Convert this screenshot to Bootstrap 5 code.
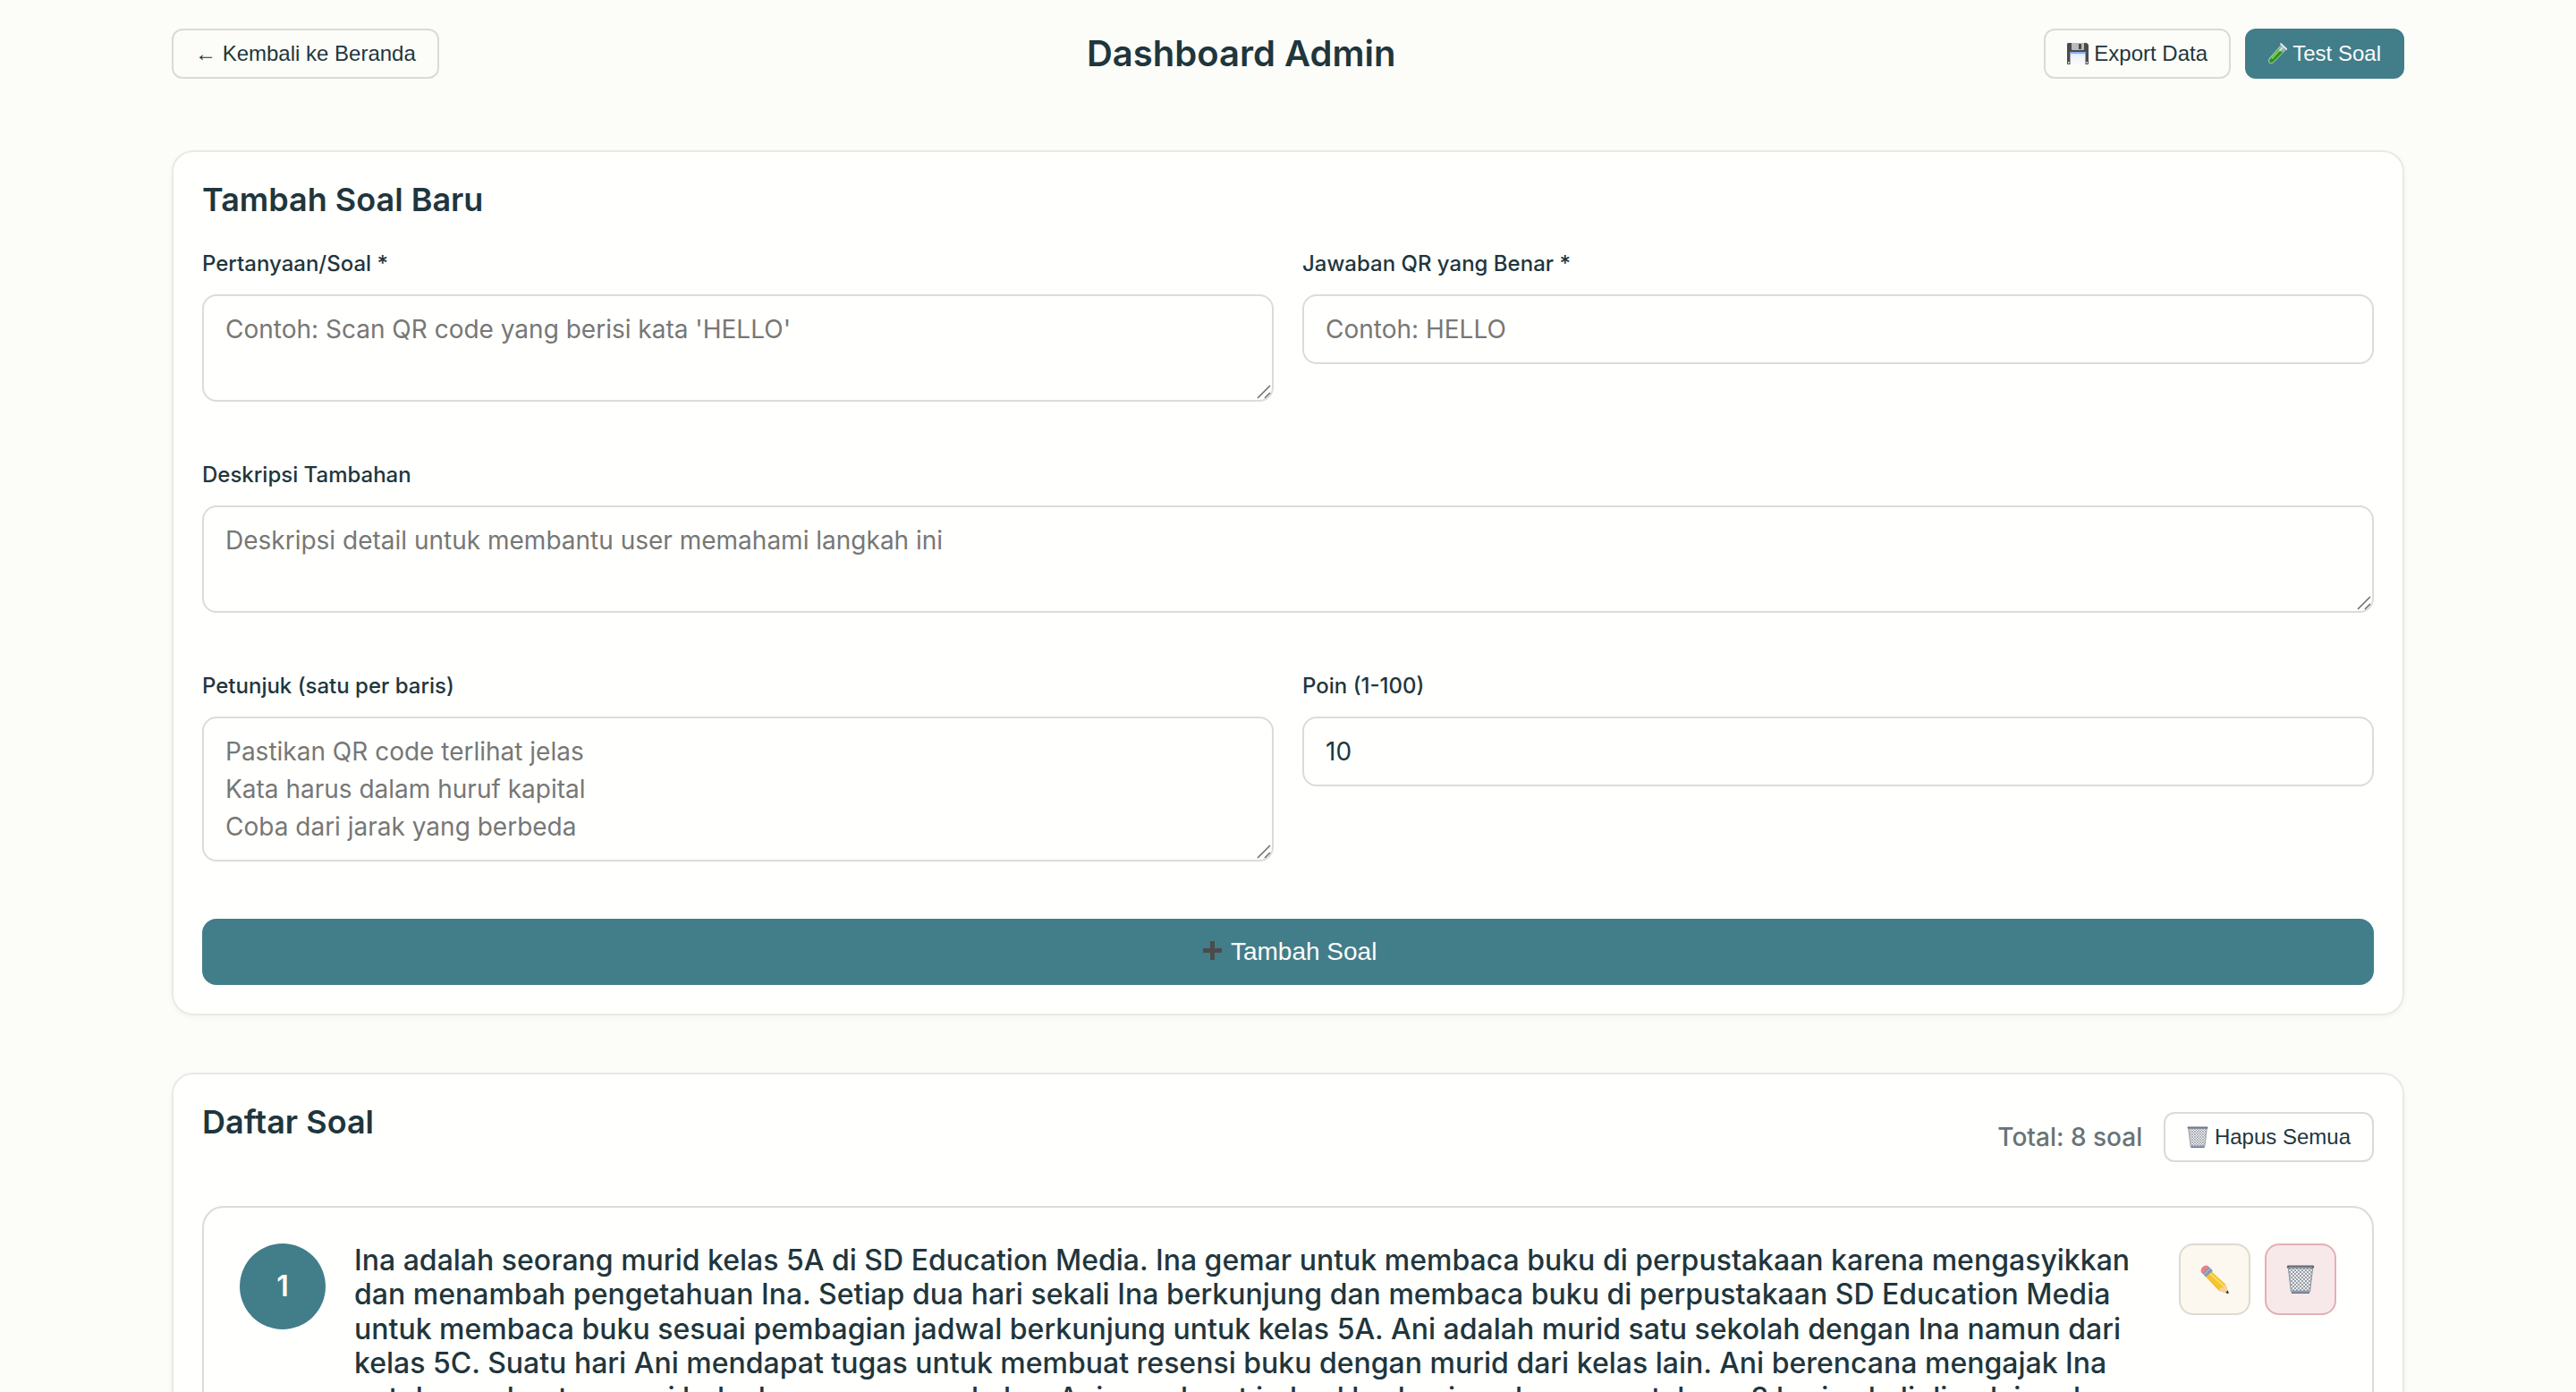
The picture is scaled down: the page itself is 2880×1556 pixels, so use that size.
<!DOCTYPE html>
<html lang="id">
<head>
<meta charset="utf-8">
<meta name="viewport" content="width=device-width, initial-scale=1">
<title>Dashboard Admin</title>
<link href="https://cdn.jsdelivr.net/npm/bootstrap@5.3.0/dist/css/bootstrap.min.css" rel="stylesheet">
<style>
  :root {
    --ink: #1f363d;
    --teal: #427d8a;
    --line: #dbdbd9;
    --surface: #fffffd;
  }
  body {
    background: #fcfdf8;
    color: var(--ink);
    font-family: Inter, "Liberation Sans", sans-serif;
    font-size: 28px;
    line-height: 42px;
  }
  .page-wrap { max-width: 2560px; padding: 32px; }
  .page-head { margin-bottom: 80px; }
  .page-title { font-size: 40px; line-height: 48px; font-weight: 600; }
  .section-title { font-size: 36px; line-height: 43px; font-weight: 600; margin-bottom: 32px; }

  .btn {
    --bs-btn-font-family: "Liberation Sans", Arial, sans-serif;
    --bs-btn-color: var(--ink);
    --bs-btn-border-width: 2px;
    --bs-btn-font-size: 28px;
    --bs-btn-line-height: 42px;
    --bs-btn-border-radius: 16px;
    --bs-btn-padding-x: 32px;
    --bs-btn-padding-y: 14px;
  }
  .btn-small {
    --bs-btn-font-size: 24px;
    --bs-btn-line-height: 36px;
    --bs-btn-border-radius: 12px;
    --bs-btn-padding-x: 24px;
    --bs-btn-padding-y: 8px;
  }
  .btn-line { --bs-btn-border-color: #dadbd7; --bs-btn-hover-border-color: #c4c5c1; --bs-btn-hover-color: var(--ink); }
  .btn-teal {
    --bs-btn-color: #fcfcf9; --bs-btn-bg: var(--teal); --bs-btn-border-color: var(--teal);
    --bs-btn-hover-color: #fff; --bs-btn-hover-bg: #386e7a; --bs-btn-hover-border-color: #386e7a;
  }
  .btn-square { --bs-btn-padding-x: 0; --bs-btn-padding-y: 0; width: 80px; height: 80px; }
  .btn-edit { --bs-btn-bg: #fdf8ef; --bs-btn-border-color: #dfdacf; --bs-btn-hover-bg: #f8efdd; --bs-btn-hover-border-color: #dfdacf; }
  .btn-remove { --bs-btn-bg: #f7e9e9; --bs-btn-border-color: #e4afb4; --bs-btn-hover-bg: #f2dada; --bs-btn-hover-border-color: #e4afb4; }

  .emo { width: 24px; height: 24px; vertical-align: -4px; }
  .emo-slim { width: 21px; }
  .emo-mid { width: 28px; height: 28px; vertical-align: -4px; }
  .emo-big { width: 32px; height: 32px; }

  .panel {
    --bs-card-bg: var(--surface);
    --bs-card-border-color: #e9eae6;
    --bs-card-border-width: 2px;
    --bs-card-border-radius: 24px;
    --bs-card-inner-border-radius: 22px;
    --bs-card-spacer-x: 32px;
    --bs-card-spacer-y: 32px;
    --bs-card-color: var(--ink);
    box-shadow: 0 2px 6px rgba(0, 0, 0, .04);
    margin-bottom: 64px;
  }
  .form-stack { gap: 64px; }
  .field-row { --bs-gutter-x: 32px; }
  .form-label { font-size: 24px; line-height: 36px; font-weight: 500; margin-bottom: 16px; display: block; }
  .form-control, .form-control:focus {
    background: var(--surface);
    border: 2px solid var(--line);
    border-radius: 16px;
    color: var(--ink);
    font-size: 28px;
    line-height: 42px;
    padding: 16px 24px;
  }
  .form-control::placeholder { color: #777776; opacity: 1; }
  textarea.form-control { resize: none; }
  .grip { position: absolute; right: 3px; bottom: 3px; width: 16px; height: 16px; pointer-events: none; }

  .list-head { margin-bottom: 40px; }
  .total-text { color: #687378; font-weight: 500; }
  .question { --bs-card-border-color: var(--line); --bs-card-spacer-x: 40px; --bs-card-spacer-y: 40px; box-shadow: none; margin: 0; }
  .question-no {
    width: 96px; height: 96px; background: var(--teal); color: #fcfcf9;
    font-size: 32px; font-weight: 600;
  }
  .question-text { font-size: 32px; font-weight: 500; line-height: 1.2; }
</style>
</head>
<body>

<svg class="position-absolute" width="0" height="0" aria-hidden="true">
  <defs>
    <linearGradient id="gLabel" x1="0" y1="0" x2="0" y2="1"><stop offset="0" stop-color="#c9ddfb"/><stop offset=".35" stop-color="#eef2fa"/><stop offset="1" stop-color="#fafafa"/></linearGradient>
    <linearGradient id="gPencil" x1="0" y1="1" x2="1" y2="0"><stop offset="0" stop-color="#d99a1c"/><stop offset=".45" stop-color="#f6c531"/><stop offset="1" stop-color="#e9a92a"/></linearGradient>
    <pattern id="mesh" width="4" height="4" patternUnits="userSpaceOnUse">
      <path d="M0 0L4 4M4 0L0 4" stroke="#777b83" stroke-width=".7" fill="none"/>
    </pattern>
  </defs>
  <symbol id="i-disk" viewBox="0 0 24 24">
    <path d="M0 1.500Q0 0 1 0H22L24 2V23Q24 24 23 24H1Q0 24 0 23Z" fill="#4b4b4d"/>
    <path d="M5 0H19V7Q19 8 18 8H6Q5 8 5 7Z" fill="#b9babc"/>
    <path d="M13 1H16V7H13Z" fill="#4b4b4d"/>
    <path d="M3.500 10H20.500V24H3.500Z" fill="url(#gLabel)"/>
    <path d="M3.500 10H20.500V12H3.500Z" fill="#86aef0"/>
    <path d="M1 21H2.500V23H1ZM21.500 21H23V23H21.500Z" fill="#e4e4e4"/>
  </symbol>
  <symbol id="i-tube" viewBox="1 0 21 24">
    <path d="M16 1.500L21.500 6.500L7 21.500Q4 24 2 22Q0 20 2.500 17Z" fill="#8fb3a8" stroke="#b9ccd0" stroke-width=".8"/>
    <path d="M12 7.500L17 10.500L6.500 21Q4 23 2.600 21.600Q1.200 20 3.500 17.500Z" fill="#2f9418"/>
    <path d="M13 8.500L5 17.500" stroke="#7fdc4c" stroke-width="1.800"/>
    <path d="M15 1L21.500 7" stroke="#dfe8ea" stroke-width="1.800" stroke-linecap="round"/>
    <path d="M17 5L13.500 9" stroke="#e8f1f2" stroke-width="1.200"/>
  </symbol>
  <symbol id="i-plus" viewBox="0 0 28 28">
    <path d="M12 3H17V11H25V16H17V24H12V16H4V11H12Z" fill="#4b4b4d"/>
  </symbol>
  <symbol id="i-bin" viewBox="0 0 32 32">
    <path d="M2 3H30L26.500 30Q26 31.500 24 31.500H8Q6 31.500 5.500 30Z" fill="#eceef0"/>
    <path d="M2 3H30L26.500 30H5.500Z" fill="url(#mesh)"/>
    <path d="M2.500 4L5.500 30M29.500 4L26.500 30" stroke="#9298a2" stroke-width="1.200"/>
    <path d="M5.300 28.500H26.700L26 31.500H6Z" fill="#8f9db3"/>
    <path d="M6 31.300H26" stroke="#5b6270" stroke-width="1"/>
    <rect x=".8" y=".6" width="30.400" height="3.200" rx="1.400" fill="#62666e"/>
    <path d="M3 2.800H29" stroke="#9fb0cc" stroke-width=".9"/>
  </symbol>
  <symbol id="i-pencil" viewBox="0 0 32 32">
    <path d="M8.500 3.500L28.500 22L31.500 32L21 29L2.500 9.500Z" fill="url(#gPencil)"/>
    <path d="M9.500 8L27 24.500" stroke="#fbdd5e" stroke-width="2"/>
    <path d="M21 29L22.500 25.500L25.500 25.500L26 22.500L28.500 22L31.500 32Z" fill="#f3d3a0"/>
    <path d="M28.300 31L30.800 28.300L31.800 32.200Z" fill="#2c2a2a"/>
    <path d="M9.500 2L14 6.500L6 13.500L2 9Z" fill="#8299b8"/>
    <path d="M11.500 3.500L4 11" stroke="#b9c9de" stroke-width="1"/>
    <path d="M1.300 8.500Q-.5 5.500 2.500 2.300Q5.500-.6 8.800 1.200L10 2.500L2.500 9.700Z" fill="#e5828a"/>
  </symbol>
  <symbol id="i-grip" viewBox="0 0 16 16">
    <path d="M1 15L15 1M9 15L15 9" stroke="#6b6b6b" stroke-width="1.500" fill="none"/>
  </symbol>
</svg>

<div class="container-fluid page-wrap">

  <header class="page-head d-flex justify-content-between align-items-center">
    <button type="button" class="btn btn-small btn-line">← Kembali ke Beranda</button>
    <h1 class="page-title mb-0">Dashboard Admin</h1>
    <div class="d-flex gap-3">
      <button type="button" class="btn btn-small btn-line"><svg class="emo" aria-hidden="true"><use href="#i-disk"/></svg> Export Data</button>
      <button type="button" class="btn btn-small btn-teal"><svg class="emo emo-slim" aria-hidden="true"><use href="#i-tube"/></svg> Test Soal</button>
    </div>
  </header>

  <main>
    <section class="card panel">
      <div class="card-body">
        <h2 class="section-title">Tambah Soal Baru</h2>
        <form class="form-stack d-flex flex-column">
          <div class="row field-row">
            <div class="col-6">
              <label class="form-label" for="soal">Pertanyaan/Soal *</label>
              <div class="position-relative">
                <textarea class="form-control" id="soal" rows="2" placeholder="Contoh: Scan QR code yang berisi kata 'HELLO'"></textarea>
                <svg class="grip" aria-hidden="true"><use href="#i-grip"/></svg>
              </div>
            </div>
            <div class="col-6">
              <label class="form-label" for="jawaban">Jawaban QR yang Benar *</label>
              <input class="form-control" id="jawaban" type="text" placeholder="Contoh: HELLO">
            </div>
          </div>

          <div>
            <label class="form-label" for="deskripsi">Deskripsi Tambahan</label>
            <div class="position-relative">
              <textarea class="form-control" id="deskripsi" rows="2" placeholder="Deskripsi detail untuk membantu user memahami langkah ini"></textarea>
              <svg class="grip" aria-hidden="true"><use href="#i-grip"/></svg>
            </div>
          </div>

          <div class="row field-row">
            <div class="col-6">
              <label class="form-label" for="petunjuk">Petunjuk (satu per baris)</label>
              <div class="position-relative">
                <textarea class="form-control" id="petunjuk" rows="3" placeholder="Pastikan QR code terlihat jelas&#10;Kata harus dalam huruf kapital&#10;Coba dari jarak yang berbeda"></textarea>
                <svg class="grip" aria-hidden="true"><use href="#i-grip"/></svg>
              </div>
            </div>
            <div class="col-6">
              <label class="form-label" for="poin">Poin (1-100)</label>
              <input class="form-control" id="poin" type="number" min="1" max="100" value="10">
            </div>
          </div>

          <button type="submit" class="btn btn-teal w-100"><svg class="emo-mid" aria-hidden="true"><use href="#i-plus"/></svg> Tambah Soal</button>
        </form>
      </div>
    </section>

    <section class="card panel">
      <div class="card-body">
        <div class="list-head d-flex justify-content-between align-items-center">
          <h2 class="section-title">Daftar Soal</h2>
          <div class="d-flex align-items-center gap-4">
            <span class="total-text">Total: 8 soal</span>
            <button type="button" class="btn btn-small btn-line"><svg class="emo" aria-hidden="true"><use href="#i-bin"/></svg> Hapus Semua</button>
          </div>
        </div>

        <article class="card panel question">
          <div class="card-body d-flex align-items-start">
            <div class="question-no rounded-circle flex-shrink-0 d-flex align-items-center justify-content-center">1</div>
            <h3 class="question-text flex-grow-1 mb-0 mx-4 px-2">Ina adalah seorang murid kelas 5A di SD Education Media. Ina gemar untuk membaca buku di perpustakaan karena mengasyikkan dan menambah pengetahuan Ina. Setiap dua hari sekali Ina berkunjung dan membaca buku di perpustakaan SD Education Media untuk membaca buku sesuai pembagian jadwal berkunjung untuk kelas 5A. Ani adalah murid satu sekolah dengan Ina namun dari kelas 5C. Suatu hari Ani mendapat tugas untuk membuat resensi buku dengan murid dari kelas lain. Ani berencana mengajak Ina untuk membuat resensi buku bersama-sama kelas. Ani mendapat jadwal berkunjung ke perpustakaan 3 hari sekali dimulai pada hari</h3>
            <div class="d-flex gap-3 flex-shrink-0">
              <button type="button" class="btn btn-square btn-edit d-flex align-items-center justify-content-center" aria-label="Edit soal"><svg class="emo-big" aria-hidden="true"><use href="#i-pencil"/></svg></button>
              <button type="button" class="btn btn-square btn-remove d-flex align-items-center justify-content-center" aria-label="Hapus soal"><svg class="emo-big" aria-hidden="true"><use href="#i-bin"/></svg></button>
            </div>
          </div>
        </article>
      </div>
    </section>
  </main>
</div>

<script src="https://cdn.jsdelivr.net/npm/bootstrap@5.3.0/dist/js/bootstrap.bundle.min.js"></script>
</body>
</html>
